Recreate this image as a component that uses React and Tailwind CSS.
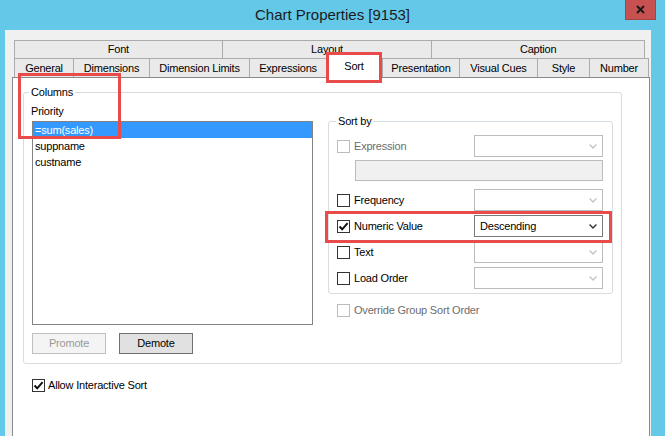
import React from "react";

const topTabs = [
  { label: "Font", cls: "w-[209px]" },
  { label: "Layout", cls: "w-[211px]" },
  { label: "Caption", cls: "w-[215px] border-r" },
];

const bottomTabs = [
  { label: "General", cls: "w-[59px]" },
  { label: "Dimensions", cls: "w-[76px]" },
  { label: "Dimension Limits", cls: "w-[100px]" },
  { label: "Expressions", cls: "w-[77px]" },
  { label: "Sort", active: true },
  { label: "Presentation", cls: "w-[77px]" },
  { label: "Visual Cues", cls: "w-[78px]" },
  { label: "Style", cls: "w-[52px]" },
  { label: "Number", cls: "w-[60px] border-r" },
];

const sortRows = [
  { label: "Frequency" },
  { label: "Numeric Value", checked: true, value: "Descending" },
  { label: "Text" },
  { label: "Load Order" },
];

const Chevron = ({ disabled }) => (
  <svg width="8" height="5" viewBox="0 0 8 5" className="shrink-0">
    <path
      d="M0.6 0.6 L4 4 L7.4 0.6"
      fill="none"
      stroke={disabled ? "#c4c4c4" : "#333333"}
      strokeWidth="1.4"
    />
  </svg>
);

const CheckBox = ({ checked, disabled }) => (
  <span
    className={
      disabled
        ? "flex h-[13px] w-[13px] shrink-0 items-center justify-center border border-[#bcbcbc] bg-white"
        : "flex h-[13px] w-[13px] shrink-0 items-center justify-center border border-[#333333] bg-white"
    }
  >
    {checked && (
      <svg width="11" height="11" viewBox="0 0 11 11">
        <path
          d="M1.5 5.5 L4.2 8.3 L9.6 2.2"
          fill="none"
          stroke="#111"
          strokeWidth="2"
        />
      </svg>
    )}
  </span>
);

const Combo = ({ value, disabled }) => (
  <div
    className={
      disabled
        ? "flex h-[22px] w-[129px] items-center justify-between border border-[#bcbcbc] bg-white pl-[5px] pr-[5px]"
        : "flex h-[22px] w-[129px] items-center justify-between border border-[#7a7a7a] bg-white pl-[5px] pr-[5px] text-black"
    }
  >
    <span>{value}</span>
    <Chevron disabled={disabled} />
  </div>
);

export default function App() {
  return (
    <div className="relative flex h-[436px] w-[665px] flex-col overflow-hidden bg-[#64c8e9] font-['Liberation_Sans',Arial,sans-serif] text-[11px] tracking-[-0.2px] text-black">
      {/* TITLE BAR */}
      <div className="grid h-[30px] shrink-0 grid-cols-[1fr_auto_1fr]">
        <div />
        <div className="flex items-center text-[15px] tracking-normal text-[#1b1b1b]">
          Chart Properties [9153]
        </div>
        <div className="flex justify-end pr-[9px]">
          <div className="flex h-[20px] w-[31px] items-center justify-center border border-t-0 border-[#a84444] bg-[#c75050]">
            <svg width="9" height="9" viewBox="0 0 9 9">
              <path d="M1 1 L8 8 M8 1 L1 8" stroke="#1a1a1a" strokeWidth="2" />
            </svg>
          </div>
        </div>
      </div>

      {/* WINDOW BODY */}
      <div className="ml-[5px] mr-[7px] flex flex-1 flex-col border-r-2 border-[#2b6f88] bg-[#f0f0f0]">
        <div className="mr-[-2px] flex flex-1 flex-col border-r-[7px] border-[#64c8e9] pl-[7px] pr-[6px] pt-[10px]">
          {/* TABS */}
          <div className="ml-[2px] flex flex-col">
            <div className="flex h-[18px]">
              {topTabs.map((t) => (
                <div
                  key={t.label}
                  className={`flex items-center justify-center border-l border-t border-[#acacac] bg-[#eaeaea] ${t.cls}`}
                >
                  {t.label}
                </div>
              ))}
            </div>
            <div className="flex h-[19px] items-end">
              {bottomTabs.map((t) =>
                t.active ? (
                  <div
                    key={t.label}
                    className="relative z-10 mb-[-1px] flex h-[24px] w-[56px] shrink-0 items-center justify-center border-l border-r border-t border-[#acacac] bg-white"
                  >
                    {t.label}
                  </div>
                ) : (
                  <div
                    key={t.label}
                    className={`flex h-[19px] shrink-0 items-center justify-center border-l border-t border-[#acacac] bg-[#eaeaea] ${t.cls}`}
                  >
                    {t.label}
                  </div>
                )
              )}
            </div>
          </div>

          {/* PANEL */}
          <div className="flex w-[638px] flex-1 flex-col border border-b-0 border-[#898989] bg-white pt-[7px]">
            <fieldset className="ml-[10px] w-[599px] rounded-[3px] border border-[#d5dde2]">
              <legend className="ml-[5px] px-[2px] leading-[14px]">Columns</legend>
              <div className="flex pb-[9px] pl-[8px]">
                {/* LEFT */}
                <div className="flex w-[281px] flex-col pt-[5px]">
                  <div className="-ml-px leading-[14px]">Priority</div>
                  <div className="mt-[3px] h-[204px] border border-[#828282] bg-white">
                    <div className="h-[16px] bg-[#3399ff] pl-[2px] leading-[16px] text-white">
                      =sum(sales)
                    </div>
                    <div className="h-[16px] pl-[2px] leading-[16px]">suppname</div>
                    <div className="h-[16px] pl-[2px] leading-[16px]">custname</div>
                  </div>
                  <div className="mt-[8px] flex gap-[13px]">
                    <button className="h-[21px] w-[74px] border border-[#bfbfbf] bg-[#f4f4f4] text-[#9a9a9a]">
                      Promote
                    </button>
                    <button className="h-[21px] w-[74px] border border-[#707070] bg-[#e1e1e1] text-black">
                      Demote
                    </button>
                  </div>
                </div>

                {/* RIGHT */}
                <div className="ml-[15px] flex w-[285px] flex-col pt-[15px]">
                  <fieldset className="rounded-[3px] border border-[#d5dde2] pb-[4px]">
                    <legend className="ml-[7px] px-[2px] leading-[14px]">Sort by</legend>
                    <div className="mt-[7px] flex items-center pl-[8px]">
                      <div className="flex w-[137px] items-center gap-[4px] text-[#6d6d6d]">
                        <CheckBox disabled />
                        <span>Expression</span>
                      </div>
                      <Combo disabled />
                    </div>
                    <div className="ml-[26px] mt-[3px] h-[21px] w-[248px] border border-[#bcbcbc] bg-[#f0f0f0]" />
                    <div className="mt-[8px] flex flex-col gap-[4px]">
                      {sortRows.map((r) => (
                        <div key={r.label} className="flex items-center pl-[8px]">
                          <div className="flex w-[137px] items-center gap-[4px]">
                            <CheckBox checked={r.checked} />
                            <span>{r.label}</span>
                          </div>
                          <Combo value={r.value} disabled={!r.checked} />
                        </div>
                      ))}
                    </div>
                  </fieldset>
                  <div className="mt-[8px] flex items-center gap-[4px] pl-[9px] text-[#6d6d6d]">
                    <CheckBox disabled />
                    <span>Override Group Sort Order</span>
                  </div>
                </div>
              </div>
            </fieldset>

            <div className="ml-[19px] mt-[13px] flex items-center gap-[3px]">
              <CheckBox checked />
              <span>Allow Interactive Sort</span>
            </div>
          </div>
        </div>
      </div>

      {/* ANNOTATIONS */}
      <div className="pointer-events-none absolute left-[18px] top-[73px] h-[66px] w-[103px] border-[3px] border-[#e94b4b]" />
      <div className="pointer-events-none absolute left-[326px] top-[52px] z-20 h-[31px] w-[56px] border-[3px] border-[#e94b4b]" />
      <div className="pointer-events-none absolute left-[325px] top-[211px] h-[32px] w-[287px] border-[3px] border-[#e94b4b]" />
    </div>
  );
}
